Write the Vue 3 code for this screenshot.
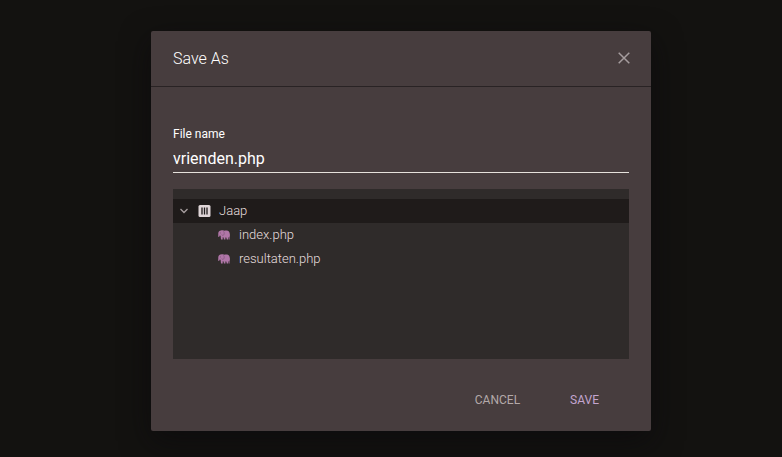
<script setup>
import { ref } from 'vue'

const fileName = ref('vrienden.php')
const expanded = ref(true)
const files = ['index.php', 'resultaten.php']
</script>

<template>
  <main class="backdrop">
    <form class="dialog" role="dialog" aria-labelledby="dialog-title" @submit.prevent>
      <header class="head">
        <h1 id="dialog-title" class="title">Save As</h1>
        <button class="close" type="button" aria-label="Close">
          <svg width="12" height="12" viewBox="0 0 12 12">
            <path d="M.7.7 11.3 11.3M11.3.7.7 11.3" fill="none" stroke="currentColor" stroke-width="1.5" />
          </svg>
        </button>
      </header>
      <div class="body">
        <label class="label" for="file-name">File name</label>
        <input id="file-name" v-model="fileName" class="input" type="text" spellcheck="false" />
        <div class="tree">
          <button class="row folder" type="button" :aria-expanded="expanded" @click="expanded = !expanded">
            <svg class="chevron" width="8" height="6" viewBox="0 0 8 6">
              <path d="M.5 1 4 4.5 7.5 1" fill="none" stroke="currentColor" stroke-width="1.3" />
            </svg>
            <svg class="drive" width="13" height="12" viewBox="0 0 13 12">
              <rect x=".5" width="12" height="12" rx="1.5" fill="#dfd5d7" />
              <path d="M4 2.5v7M6.5 2.5v7M9 2.5v7" stroke="#1f1b1b" stroke-width="1.3" />
            </svg>
            <span>Jaap</span>
          </button>
          <template v-if="expanded">
            <button v-for="file in files" :key="file" class="row file" type="button">
              <svg class="elephant" width="12" height="10" viewBox="0 0 12 10">
                <path
                  d="M3 .4C1.400.4.500 1.400.300 3 .200 4.200.500 5.300 0 6.400c.4.600 1.100.5 1.500-.2l.4-1 .7.900.4 3.500h1.700V7.300l.9.200.3 2h1.500V7.400h.9l.5 2.200H10l.1-2.700.5.8v1.900h.9V7.500c.4-1 .500-1.900.400-2.900C11.700 2.100 10.600.7 8.600.6 7.500.5 6.500.9 5.600.6 4.800.3 4 .3 3 .4Z"
                  fill="#b076a8"
                />
                <path d="M5.500 1.300c1 1.100.9 2.900.1 3.800-.8.600-1.500.2-1.900-.5" fill="none" stroke="#80567a" stroke-width=".7" />
                <circle cx="2.300" cy="2.900" r=".4" fill="#44303f" />
              </svg>
              <span>{{ file }}</span>
            </button>
          </template>
        </div>
      </div>
      <footer class="actions">
        <button class="action" type="button">CANCEL</button>
        <button class="action primary" type="submit">SAVE</button>
      </footer>
    </form>
  </main>
</template>

<style>
body {
  background: #131210;
}
</style>

<style scoped>
.backdrop {
  box-sizing: border-box;
  min-height: 100vh;
  padding: 31px 20px 26px 40px;
  display: flex;
  justify-content: center;
  align-items: flex-start;
  overflow: hidden;
  background: #131210;
  font-family: Roboto, "Liberation Sans", sans-serif;
}

.dialog {
  width: 100%;
  max-width: 500px;
  border-radius: 2px;
  background: #473d3e;
  box-shadow: 0 10px 30px rgba(10, 9, 12, 0.6);
}

button,
input {
  margin: 0;
  padding: 0;
  border: 0;
  border-radius: 0;
  background: none;
  font-family: inherit;
}

.head {
  display: flex;
  align-items: center;
  justify-content: space-between;
  height: 55px;
  padding: 0 20px 0 22px;
  border-bottom: 1px solid #292324;
}

.title {
  margin: 0;
  color: #fff;
  font-size: 16px;
  font-weight: 300;
  line-height: 20px;
}

.close {
  display: flex;
  padding: 1px 1px 2px;
  color: #a59d9e;
}

.body {
  padding: 40px 22px 0;
}

.label {
  display: block;
  color: #fff;
  font-size: 12px;
  line-height: 14px;
}

.input {
  box-sizing: border-box;
  display: block;
  width: 100%;
  height: 32px;
  border-bottom: 1px solid #e6e2dc;
  outline: none;
  color: #fff;
  font-size: 16px;
  padding-top: 3px;
}

.tree {
  box-sizing: border-box;
  min-height: 170px;
  margin-top: 16px;
  padding: 10px 0;
  background: #2f2b2a;
}

.row {
  display: flex;
  align-items: center;
  width: 100%;
  height: 24px;
  color: #e6dedf;
  font-size: 13px;
  font-weight: 300;
  line-height: 24px;
  text-align: left;
}

.folder {
  padding-left: 7px;
  background: #1f1b1a;
}

.chevron {
  margin-right: 10px;
  color: #a89fa0;
}

.drive {
  margin-right: 8px;
}

.elephant {
  margin-right: 9px;
}

.file {
  padding-left: 45px;
}

.actions {
  display: flex;
  justify-content: flex-end;
  gap: 12px;
  padding: 23px 32px 13px;
}

.action {
  height: 36px;
  padding: 0 19px;
  color: #b3a9a9;
  font-size: 12px;
}

.primary {
  padding-right: 20px;
  color: #c3a5cf;
}
</style>
